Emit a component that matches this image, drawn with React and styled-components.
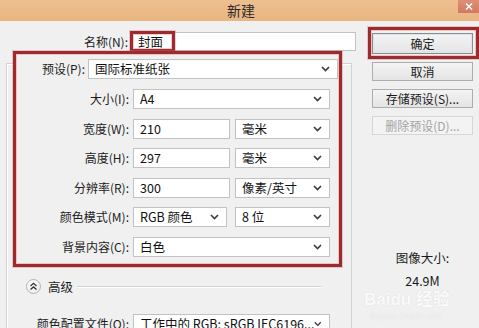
import React from 'react';
import styled, { createGlobalStyle } from 'styled-components';

const Global = createGlobalStyle`
  html, body { margin: 0; padding: 0; background: #f0f0f0; overflow: hidden; }
  body {
    font-family: "Noto Sans CJK SC", "Noto Sans", "Liberation Sans", sans-serif;
    font-size: 12px;
    color: #1c1c1c;
  }
  * { box-sizing: border-box; }
`;

const Dialog = styled.div`
  position: relative;
  width: 479px;
  height: 328px;
  overflow: hidden;
  background: #f0f0f0;
  display: flex;
  flex-direction: column;
`;

const TitleBar = styled.div`
  flex: none;
  height: 21px;
  display: grid;
  grid-template-columns: 1fr auto 1fr;
  align-items: start;
  background: linear-gradient(#eebf8f, #e8b581);
`;

const Title = styled.div`
  grid-column: 2;
  font-size: 14px;
  line-height: 20px;
  color: #2a2a2a;
  padding-left: 3px;
`;

const CloseButton = styled.div`
  grid-column: 3;
  justify-self: end;
  width: 21px;
  height: 13px;
  background: linear-gradient(#dd8f76, #d17a62);
  display: flex;
  align-items: center;
  justify-content: center;
`;

const Body = styled.div`
  flex: 1;
  min-height: 0;
  display: flex;
`;

const LeftCol = styled.div`
  width: 360px;
  flex: none;
  display: flex;
  flex-direction: column;
  padding-top: 11px;
`;

const NameRow = styled.div`
  display: flex;
  align-items: center;
  height: 19px;
  gap: 3px;
`;

const Label = styled.div`
  width: ${p => p.$w}px;
  flex: none;
  text-align: right;
  white-space: nowrap;
  line-height: 16px;
  color: #1c1c1c;
`;

const Field = styled.div`
  width: ${p => p.$w}px;
  height: ${p => p.$h || 20}px;
  flex: none;
  background: #fff;
  border: 1px solid #c2c2c2;
  display: flex;
  align-items: center;
  justify-content: space-between;
  padding: 0 7px 0 6px;
  white-space: nowrap;
  overflow: hidden;
  line-height: 16px;
  font-size: 12.5px;
  color: #111;
`;

const Group = styled.div`
  flex: 1;
  margin-top: 12px;
  margin-left: 6px;
  width: 346px;
  border: 1px solid #d2d2d2;
  border-bottom: none;
  box-shadow: inset 1px 1px 0 #fff;
  display: flex;
  flex-direction: column;
`;

const Legend = styled.div`
  margin-top: -5px;
  margin-left: 7px;
  width: 327px;
  height: 20px;
  background: #f0f0f0;
  display: flex;
  align-items: center;
  gap: 3px;
`;

const Rows = styled.div`
  margin-top: 10px;
  display: flex;
  flex-direction: column;
  gap: 9.6px;
`;

const Row = styled.div`
  display: flex;
  align-items: center;
  height: 20px;
  gap: 4px;
`;

const Pair = styled.div`
  display: flex;
  gap: ${p => p.$gap}px;
`;

const Advanced = styled.div`
  margin-top: 22px;
  height: 16px;
  display: flex;
  align-items: center;
  padding-left: 19px;
  padding-right: 30px;
`;

const Toggle = styled.div`
  width: 15px;
  height: 15px;
  border-radius: 50%;
  border: 1px solid #b4b4b4;
  background: radial-gradient(circle at 40% 35%, #ffffff, #e6e6e6);
  display: flex;
  align-items: center;
  justify-content: center;
`;

const AdvancedText = styled.span`
  margin-left: 7px;
  font-size: 12.5px;
  line-height: 16px;
`;

const Rule = styled.div`
  flex: 1;
  height: 1px;
  margin-left: 4px;
  background: #d0d0d0;
  box-shadow: 0 1px 0 #fff;
`;

const ProfileRow = styled(Row)`
  margin-top: 19px;
`;

const RightCol = styled.div`
  flex: 1;
  display: flex;
  flex-direction: column;
  padding-left: 12px;
  padding-top: 12px;
`;

const Buttons = styled.div`
  width: 101px;
  display: flex;
  flex-direction: column;
  gap: 8px;
`;

const Button = styled.div`
  height: ${p => (p.$primary ? 21 : 19)}px;
  border: 1px solid ${p => (p.$disabled ? '#d6d6d6' : p.$primary ? '#8c8c8c' : '#adadad')};
  background: ${p => (p.$disabled ? '#f3f3f3' : 'linear-gradient(#f4f4f4, #e4e4e4)')};
  box-shadow: ${p => (p.$primary ? 'inset 0 0 0 1px #d8e4f0' : 'none')};
  color: ${p => (p.$disabled ? '#a3a3a3' : '#1a1a1a')};
  display: flex;
  align-items: center;
  justify-content: center;
  font-size: 12px;
  line-height: 16px;
  white-space: nowrap;
`;

const Info = styled.div`
  width: 101px;
  margin-top: 115px;
  display: flex;
  flex-direction: column;
  align-items: center;
  gap: 7px;
  font-size: 12.5px;
  line-height: 16px;
  color: #1a1a1a;
`;

const Annotation = styled.div`
  position: absolute;
  left: ${p => p.$x}px;
  top: ${p => p.$y}px;
  width: ${p => p.$w}px;
  height: ${p => p.$h}px;
  border: 3px solid #9c2a2e;
  box-shadow: inset 0 0 0 1px rgba(230, 150, 150, 0.5), 0 0 0 1px rgba(200, 120, 120, 0.35);
  pointer-events: none;
`;

const Watermark = styled.div`
  position: absolute;
  left: 364px;
  top: 291px;
  display: flex;
  flex-direction: column;
  align-items: flex-start;
  pointer-events: none;
  white-space: nowrap;
  color: rgba(255, 255, 255, 0.9);
  text-shadow: 0 0 1px rgba(150, 150, 150, 0.3);
`;

const WatermarkMain = styled.div`
  font-family: "Liberation Sans", "Noto Sans CJK SC", sans-serif;
  font-weight: bold;
  font-size: 17px;
  line-height: 17px;
`;

const WatermarkSub = styled.div`
  margin-top: 3px;
  margin-left: 6px;
  font-family: "Liberation Sans", sans-serif;
  font-size: 9px;
  line-height: 10px;
  color: rgba(255, 255, 255, 0.7);
`;

const Chevron = () => (
  <svg width="9" height="6" viewBox="0 0 9 6">
    <polyline points="1,1 4.5,4.6 8,1" fill="none" stroke="#3a3a3a" strokeWidth="1.6" />
  </svg>
);

const Select = ({ w, children }) => (
  <Field $w={w}>
    <span>{children}</span>
    <Chevron />
  </Field>
);

const DoubleUp = () => (
  <svg width="9" height="9" viewBox="0 0 9 9">
    <polyline points="1.5,4 4.5,1.3 7.5,4" fill="none" stroke="#333" strokeWidth="1.3" />
    <polyline points="1.5,7.6 4.5,4.9 7.5,7.6" fill="none" stroke="#333" strokeWidth="1.3" />
  </svg>
);

export default function App() {
  return (
    <>
      <Global />
      <Dialog>
        <TitleBar>
          <Title>新建</Title>
          <CloseButton>
            <svg width="8" height="7" viewBox="0 0 8 7">
              <path d="M1 0.5 L7 6.5 M7 0.5 L1 6.5" stroke="#fff" strokeWidth="1.5" />
            </svg>
          </CloseButton>
        </TitleBar>
        <Body>
          <LeftCol>
            <NameRow>
              <Label $w={128}>名称(N):</Label>
              <Field $w={225} $h={19}>封面</Field>
            </NameRow>
            <Group>
              <Legend>
                <Label $w={71}>预设(P):</Label>
                <Select w={250}>国际标准纸张</Select>
              </Legend>
              <Rows>
                <Row>
                  <Label $w={122}>大小(I):</Label>
                  <Select w={197}>A4</Select>
                </Row>
                <Row>
                  <Label $w={122}>宽度(W):</Label>
                  <Pair $gap={5}>
                    <Field $w={97}>210</Field>
                    <Select w={95}>毫米</Select>
                  </Pair>
                </Row>
                <Row>
                  <Label $w={122}>高度(H):</Label>
                  <Pair $gap={5}>
                    <Field $w={97}>297</Field>
                    <Select w={95}>毫米</Select>
                  </Pair>
                </Row>
                <Row>
                  <Label $w={122}>分辨率(R):</Label>
                  <Pair $gap={5}>
                    <Field $w={97}>300</Field>
                    <Select w={95}>像素/英寸</Select>
                  </Pair>
                </Row>
                <Row>
                  <Label $w={122}>颜色模式(M):</Label>
                  <Pair $gap={8}>
                    <Select w={94}>RGB 颜色</Select>
                    <Select w={95}>8 位</Select>
                  </Pair>
                </Row>
                <Row>
                  <Label $w={122}>背景内容(C):</Label>
                  <Select w={197}>白色</Select>
                </Row>
              </Rows>
              <Advanced>
                <Toggle>
                  <DoubleUp />
                </Toggle>
                <AdvancedText>高级</AdvancedText>
                <Rule />
              </Advanced>
              <ProfileRow>
                <Label $w={122}>颜色配置文件(O):</Label>
                <Select w={197}>工作中的 RGB: sRGB IEC6196...</Select>
              </ProfileRow>
            </Group>
          </LeftCol>
          <RightCol>
            <Buttons>
              <Button $primary>确定</Button>
              <Button>取消</Button>
              <Button>存储预设(S)...</Button>
              <Button $disabled>删除预设(D)...</Button>
            </Buttons>
            <Info>
              <div>图像大小:</div>
              <div>24.9M</div>
            </Info>
          </RightCol>
        </Body>
        <Annotation $x={130} $y={31} $w={45} $h={21} />
        <Annotation $x={13} $y={51} $w={329} $h={216} />
        <Annotation $x={368} $y={27} $w={111} $h={32} />
        <Watermark>
          <WatermarkMain>Baidu 经验</WatermarkMain>
          <WatermarkSub>jingyan.baidu.com</WatermarkSub>
        </Watermark>
      </Dialog>
    </>
  );
}
